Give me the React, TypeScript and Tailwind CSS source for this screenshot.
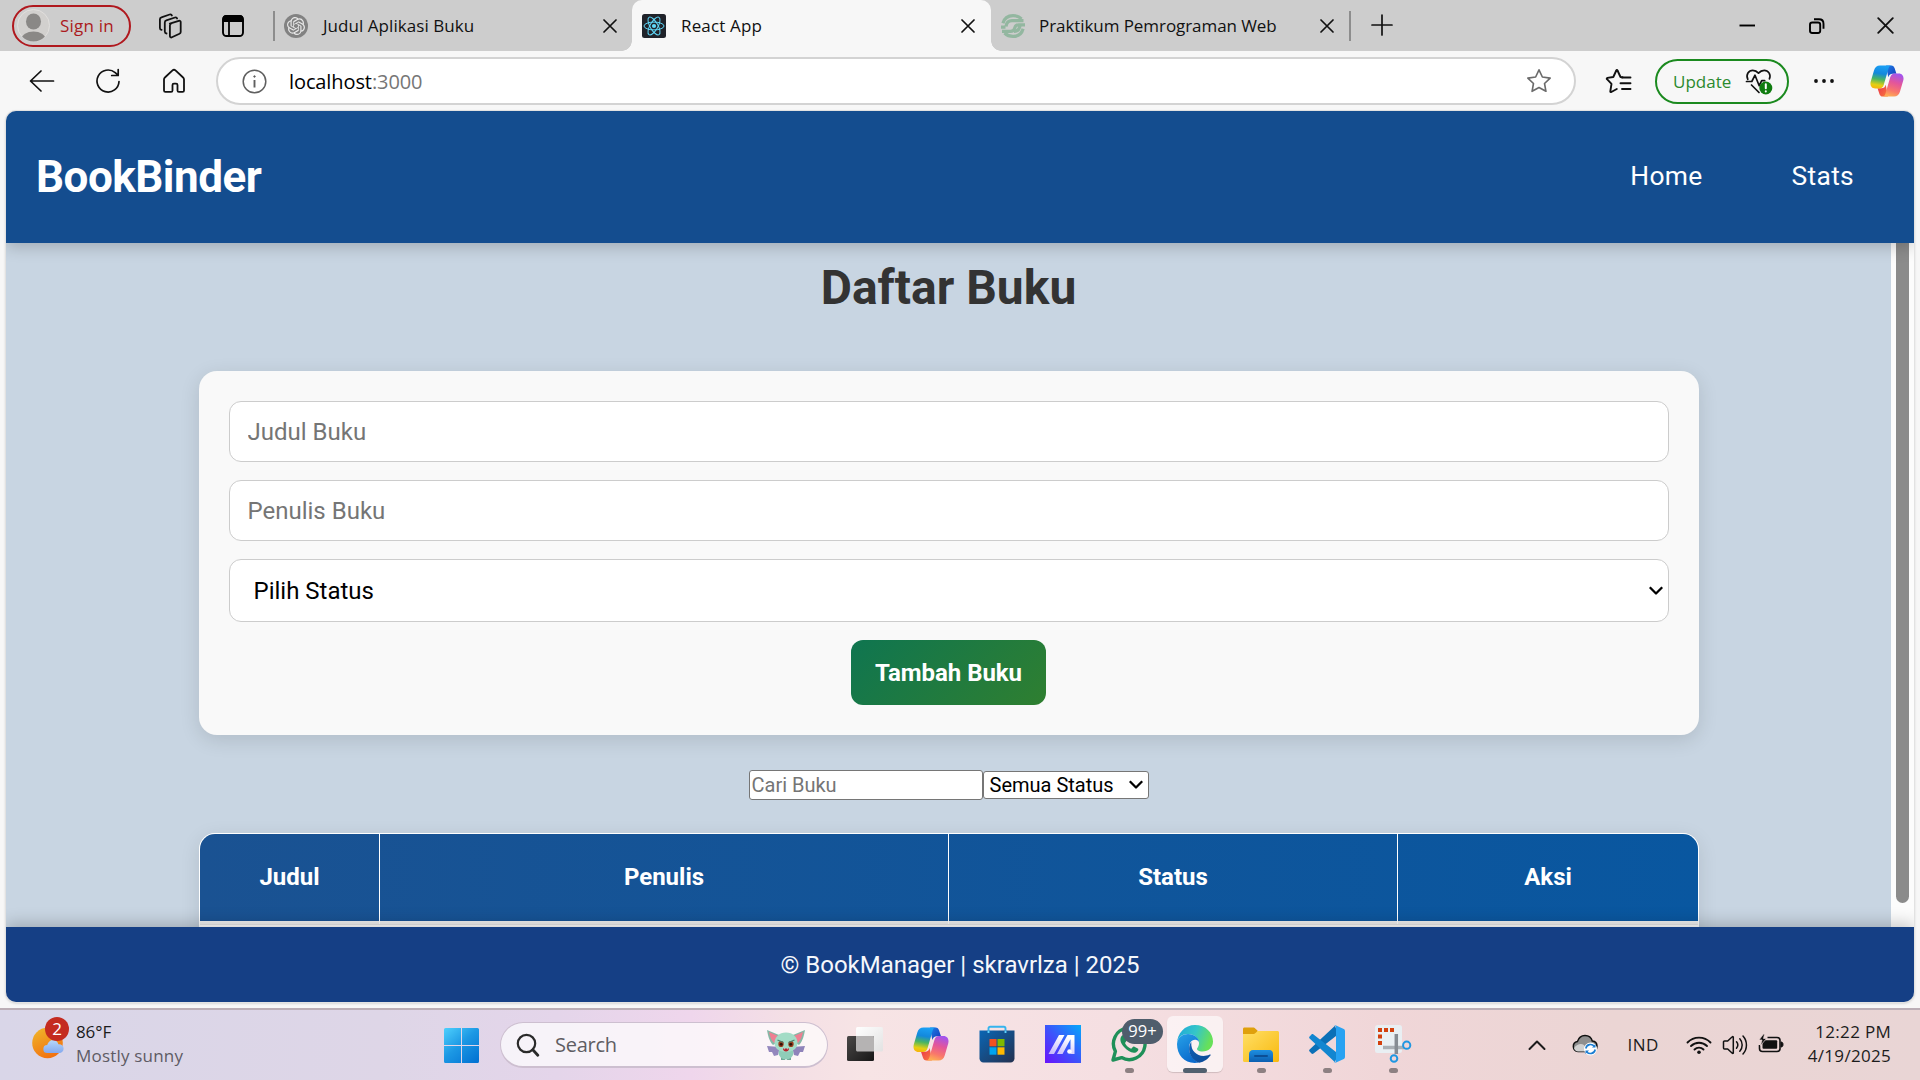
import type { ReactNode } from "react";
import { SiOpenai } from "react-icons/si";

const SEGOE = "font-['Open_Sans','Noto_Sans',sans-serif]";

/* ---------- browser icons ---------- */

function CloseX({ size = 14, sw = 1.7 }: { size?: number; sw?: number }) {
  return (
    <svg width={size} height={size} viewBox="0 0 14 14" fill="none" stroke="#111" strokeWidth={sw} strokeLinecap="round">
      <path d="M1 1l12 12M13 1L1 13" />
    </svg>
  );
}

function WorkspacesIcon() {
  return (
    <svg width="26" height="26" viewBox="0 0 26 26" fill="none" stroke="#111" strokeWidth="1.8" strokeLinejoin="round" strokeLinecap="round">
      <path d="M12.800 10.600l9-2.800c1-.3 1.900.3 1.900 1.300v9.800c0 .8-.4 1.400-1.200 1.800l-7.600 3.600c-1 .5-2-.1-2-1.200V12.400c0-.9.4-1.500 1.200-1.800z" />
      <path d="M9.500 20.500c-1.200-.2-1.700-.8-1.700-1.900V9.400c0-1 .5-1.700 1.500-2l8.700-2.900c1.100-.3 1.800 0 2.100 1" />
      <path d="M4.600 16.800c-1.200-.2-1.700-.8-1.700-1.900V6.300c0-1 .5-1.700 1.500-2l8.300-2.800c1.200-.3 1.900 0 2.200 1" />
    </svg>
  );
}

function TabActionsIcon() {
  return (
    <svg width="24" height="24" viewBox="0 0 24 24" fill="none">
      <rect x="2" y="2" width="20" height="20" rx="3.500" stroke="#000" strokeWidth="1.900" />
      <path d="M1.500 8V5a4 4 0 014-4h13a4 4 0 014 4v3z" fill="#000" />
      <path d="M8 8v14" stroke="#000" strokeWidth="1.800" />
    </svg>
  );
}

function ReactFavicon() {
  return (
    <svg width="24" height="24" viewBox="0 0 24 24">
      <rect width="24" height="24" rx="2.500" fill="#20232a" />
      <g fill="none" stroke="#61dafb" strokeWidth="1">
        <ellipse cx="12" cy="12" rx="10" ry="3.900" />
        <ellipse cx="12" cy="12" rx="10" ry="3.900" transform="rotate(60 12 12)" />
        <ellipse cx="12" cy="12" rx="10" ry="3.900" transform="rotate(120 12 12)" />
      </g>
      <circle cx="12" cy="12" r="2.100" fill="#61dafb" />
    </svg>
  );
}

function SwirlFavicon() {
  return (
    <svg width="24" height="24" viewBox="0 0 24 24" fill="none" stroke="#93b7a0" strokeWidth="3.200">
      <path d="M20.500 5C18 2.600 15 1.600 12 1.600 7 1.600 3.200 4.600 1.900 9.300" />
      <path d="M0 13.200h4.500M1 17.300h8.500c2.500 0 3.500-.8 4-2.500l.5-1.600c.5-1.600 1.500-2.300 3.500-2.300H24" />
      <path d="M5 12.500C5.500 8.500 7.500 6.700 11 6.700H22.500M3.500 19C6 21.400 9 22.400 12 22.400c5 0 8.800-3 10.100-7.700" />
      <path d="M19 11.500c-.5 4-2.500 5.800-6 5.800" />
    </svg>
  );
}

function CopilotIcon({ size, id }: { size: number; id: string }) {
  return (
    <svg width={size} height={size} viewBox="0 0 36 36">
      <defs>
        <linearGradient id={`${id}a`} x1="0.500" y1="0" x2="0.350" y2="1">
          <stop offset="0" stopColor="#1ba0f5" />
          <stop offset=".35" stopColor="#1388dc" />
          <stop offset=".6" stopColor="#4ab562" />
          <stop offset=".85" stopColor="#e5cf12" />
          <stop offset="1" stopColor="#f6b60d" />
        </linearGradient>
        <linearGradient id={`${id}b`} x1="0.700" y1="0" x2="0.400" y2="1">
          <stop offset="0" stopColor="#a154f0" />
          <stop offset=".4" stopColor="#e3559b" />
          <stop offset=".75" stopColor="#f9776b" />
          <stop offset="1" stopColor="#fdac55" />
        </linearGradient>
        <linearGradient id={`${id}c`} x1="0" y1="0" x2="1" y2="1">
          <stop offset="0" stopColor="#1c7fe8" />
          <stop offset="1" stopColor="#1638b8" />
        </linearGradient>
        <linearGradient id={`${id}d`} x1="0" y1="0" x2="1" y2="1">
          <stop offset="0" stopColor="#e8324f" />
          <stop offset="1" stopColor="#fb7a3c" />
        </linearGradient>
      </defs>
      <path d="M17 1.500h5.500c2 0 3 1.200 3.600 3l1.900 5.800h-4c-2.600 0-4 1.300-4.700 3.800z" fill={`url(#${id}c)`} />
      <path d="M19 34.500h-5.500c-2 0-3-1.200-3.600-3L8 25.700h4c2.600 0 4-1.300 4.700-3.800z" fill={`url(#${id}d)`} />
      <path d="M10.500 1.500H23c-2 0-2.800 1.200-3.400 3.200l-5 17.300c-.8 2.600-2.200 4-4.800 4H5.500C1.500 26-.3 22.500.8 18.500L4.300 6.500c1-3.300 3-5 6.200-5z" fill={`url(#${id}a)`} />
      <path d="M25.500 34.500H13c2 0 2.800-1.200 3.400-3.200l5-17.300c.8-2.600 2.200-4 4.800-4h4.300c4 0 5.800 3.500 4.700 7.500l-3.500 12c-1 3.300-3 5-6.200 5z" fill={`url(#${id}b)`} />
    </svg>
  );
}

/* ---------- browser chrome ---------- */

function TabBar() {
  return (
    <div className={`flex h-[51px] shrink-0 items-center bg-[#cdcdcd] text-[17px] text-[#111] ${SEGOE}`}>
      <div className="ml-3 flex h-[42px] w-[119px] items-center rounded-full border-2 border-[#b0181e] pl-1 text-[#ab1a20]">
        <svg width="33" height="33" viewBox="0 0 33 33" className="-ml-px mr-[10px]">
          <defs>
            <clipPath id="avatar">
              <circle cx="16.500" cy="16.500" r="16" />
            </clipPath>
          </defs>
          <circle cx="16.500" cy="16.500" r="16" fill="#d2d0ce" stroke="#e1dfdd" />
          <g clipPath="url(#avatar)" fill="#8a8886">
            <ellipse cx="16.500" cy="12.500" rx="7.500" ry="8" />
            <ellipse cx="16.500" cy="30" rx="12" ry="7.500" />
          </g>
        </svg>
        <span className="tracking-[0.2px]">Sign in</span>
      </div>
      <div className="ml-[26px]"><WorkspacesIcon /></div>
      <div className="ml-[38px]"><TabActionsIcon /></div>
      <div className="ml-[28px] h-[30px] w-[2px] bg-[#8d8d8d]" />
      <div className="ml-[9px] flex size-6 items-center justify-center rounded-full bg-[#828282] text-[#e8e8e8]">
        <SiOpenai size={18} />
      </div>
      <span className="ml-[15px] w-[280px] tracking-[0.050px]">Judul Aplikasi Buku</span>
      <CloseX />
      <div className="relative ml-[15px] flex h-[51px] w-[359px] items-center rounded-t-[10px] bg-[#f7f7f7] pl-[10px]">
        <div className="absolute -left-[10px] bottom-0 size-[10px] bg-[radial-gradient(circle_at_0_0,#cdcdcd_9.500px,#f7f7f7_10px)]" />
        <div className="absolute -right-[10px] bottom-0 size-[10px] bg-[radial-gradient(circle_at_100%_0,#cdcdcd_9.500px,#f7f7f7_10px)]" />
        <ReactFavicon />
        <span className="ml-[15px] w-[280px] tracking-[0.150px]">React App</span>
        <CloseX />
      </div>
      <div className="ml-[10px]"><SwirlFavicon /></div>
      <span className="ml-[14px] w-[281px] tracking-[-0.070px]">Praktikum Pemrograman Web</span>
      <CloseX />
      <div className="ml-[15px] h-[30px] w-[2px] bg-[#8d8d8d]" />
      <svg width="22" height="22" viewBox="0 0 22 22" className="-mt-0.5 ml-5" stroke="#111" strokeWidth="1.700" strokeLinecap="round">
        <path d="M11 1v20M1 11h20" />
      </svg>
      <div className="ml-auto flex items-center pr-[26px]">
        <svg width="16" height="16" viewBox="0 0 16 16" stroke="#000" strokeWidth="1.900"><path d="M0.500 7.500h15.500" /></svg>
        <svg width="18" height="18" viewBox="0 0 18 18" className="ml-[53px]" fill="none" stroke="#000" strokeWidth="1.900">
          <rect x="2" y="5.500" width="10.200" height="10.500" rx="2.200" />
          <path d="M6 2.200h5c2.800 0 4.500 1.700 4.500 4.500v5" />
        </svg>
        <div className="ml-[51px]"><CloseX size={17} sw={1.500} /></div>
      </div>
    </div>
  );
}

function Toolbar() {
  return (
    <div className={`flex h-[60px] shrink-0 items-center bg-[#f7f7f7] ${SEGOE}`}>
      <svg width="26" height="24" viewBox="0 0 26 24" className="ml-[29px]" fill="none" stroke="#111" strokeWidth="1.700" strokeLinecap="round" strokeLinejoin="round">
        <path d="M12 2L1.500 12 12 22M2 12h22.500" />
      </svg>
      <svg width="26" height="26" viewBox="0 0 26 26" className="ml-10" fill="none" stroke="#111" strokeWidth="1.700" strokeLinecap="round" strokeLinejoin="round">
        <path d="M24 13.500a11 11 0 11-3.800-8.800L23 7.200M23.200 1.500v6h-6.500" />
      </svg>
      <svg width="26" height="26" viewBox="0 0 26 26" className="ml-10" fill="none" stroke="#111" strokeWidth="1.800" strokeLinejoin="round">
        <path d="M3 11.500c0-.8.300-1.500.9-2l7.600-7.100c.9-.8 2.100-.8 3 0l7.600 7.100c.6.500.9 1.200.9 2V22.500c0 .8-.6 1.400-1.400 1.400h-3.700c-.8 0-1.400-.6-1.400-1.400v-5.500c0-.8-.6-1.400-1.400-1.400h-2.200c-.8 0-1.400.6-1.400 1.400v5.500c0 .8-.6 1.400-1.400 1.400H4.400c-.8 0-1.400-.6-1.400-1.400z" />
      </svg>
      <div className="ml-[29px] flex h-12 w-[1360px] items-center rounded-full border-2 border-[#d3d3d3] bg-white pl-[24px] pr-[22px]">
        <svg width="25" height="25" viewBox="0 0 25 25" fill="none" stroke="#5f5f5f" strokeWidth="1.500">
          <circle cx="12.500" cy="12.500" r="11.300" />
          <path d="M12.500 11v7.500" strokeWidth="1.900" />
          <circle cx="12.500" cy="7.500" r=".8" fill="#5f5f5f" strokeWidth=".8" />
        </svg>
        <span className="ml-[22px] flex-1 pt-px text-[20px] tracking-[-0.100px] text-black">
          localhost<span className="text-[#767676]">:3000</span>
        </span>
        <svg width="26" height="26" viewBox="0 0 24 24" fill="none" stroke="#6b6b6b" strokeWidth="1.500" strokeLinejoin="round">
          <path d="M12 1.700l3.100 6.600 7.200 1-5.200 5 1.300 7.200L12 18l-6.400 3.500 1.300-7.200-5.200-5 7.200-1z" />
        </svg>
      </div>
      <svg width="28" height="26" viewBox="0 0 28 26" className="ml-[29px]" fill="none" stroke="#111" strokeWidth="1.900" strokeLinejoin="round" strokeLinecap="round">
        <path d="M17.500 9.300l-2-.3-3-6.500c-.2-.6-1-.6-1.200 0L8.300 9l-5.900.9c-.7.1-.9.9-.4 1.300l4.500 4.600-1.200 7.500c-.1.600.5 1 1 .7l5.500-3" />
        <path d="M17 9.500h8.500M15.500 15.300h10M17 21h8.500" />
      </svg>
      <div className="ml-[22px] flex h-[45px] w-[134px] items-center rounded-full border-2 border-[#1b8a1f] pl-4 text-[17px] text-[#2b8a2e]">
        <span className="pt-px">Update</span>
        <svg width="28" height="28" viewBox="0 0 28 28" className="ml-[14px]" fill="none" stroke="#111" strokeWidth="1.700" strokeLinejoin="round" strokeLinecap="round">
          <path d="M2.800 12.300C.5 7.600 3.800 3.300 7.800 3.300c2.600 0 4.300 1.200 5.700 2.800 1.400-1.600 3.100-2.800 5.700-2.800 4 0 7.100 4 5.200 8.500" />
          <path d="M1.500 14.500h5.300l3.200-6.300 4.200 10.500 2.500-5h3M6.500 18l7.500 7.500" />
          <circle cx="20.800" cy="21" r="6.500" fill="#107c10" stroke="none" />
          <path d="M20.800 17.300v4M20.800 24.300v.1" stroke="#fff" strokeWidth="2" />
        </svg>
      </div>
      <svg width="22" height="6" viewBox="0 0 22 6" className="ml-[24px]" fill="#111">
        <circle cx="3" cy="3" r="1.900" />
        <circle cx="11" cy="3" r="1.900" />
        <circle cx="19" cy="3" r="1.900" />
      </svg>
      <div className="ml-[35px]"><CopilotIcon size={34} id="cpTop" /></div>
    </div>
  );
}

/* ---------- page ---------- */

function Chevron() {
  return (
    <svg width="16" height="10" viewBox="0 0 16 10" fill="none" stroke="#000" strokeWidth="2.300" strokeLinejoin="round">
      <path d="M1.800 1.300L8 7.500l6.200-6.200" />
    </svg>
  );
}

const columns = [
  { label: "Judul", width: "w-[180px]" },
  { label: "Penulis", width: "w-[569px]" },
  { label: "Status", width: "w-[449px]" },
  { label: "Aksi", width: "w-[300px]" },
];

function BookPage() {
  return (
    <div className="mx-[6px] flex h-[891px] flex-col overflow-hidden rounded-[10px] font-[Roboto,sans-serif] shadow-[0_0_0_1px_#e2e2e2,0_1px_3px_rgba(0,0,0,0.25)]">
      <header className="relative z-10 flex h-[132px] shrink-0 items-center justify-between bg-[#144d8f] pl-[30px] pr-[60px] text-white shadow-[0_4px_15px_rgba(0,0,0,0.2)]">
        <h1 className="text-[44px] font-bold tracking-[-0.500px]">BookBinder</h1>
        <nav className="flex gap-[89px] text-[26.400px] tracking-[0.300px]">
          <a>Home</a>
          <a>Stats</a>
        </nav>
      </header>

      <div className="flex h-[684px] shrink-0 overflow-hidden bg-[#c8d5e2]">
        <main className="flex flex-1 flex-col items-center">
          <h2 className="mt-[17px] text-[48px] leading-[56px] font-bold text-[#333]">Daftar Buku</h2>

          <form className="mt-[55px] flex h-[364px] w-[1500px] shrink-0 flex-col items-center gap-[18px] rounded-[18px] bg-[#f9f9f9] p-[30px] text-[24px] shadow-[0_5px_20px_rgba(0,0,0,0.12)]">
            <input placeholder="Judul Buku" className="h-[61px] w-full shrink-0 rounded-[12px] border border-[#ccc] bg-white px-[18px] placeholder:text-[#757575]" />
            <input placeholder="Penulis Buku" className="h-[61px] w-full shrink-0 rounded-[12px] border border-[#ccc] bg-white px-[18px] placeholder:text-[#757575]" />
            <div className="flex h-[63px] w-full shrink-0 items-center justify-between rounded-[12px] border border-[#ccc] bg-white pl-[24px] pr-[4px] text-black">
              <span>Pilih Status</span>
              <Chevron />
            </div>
            <button className="h-[65px] w-[195px] shrink-0 rounded-[12px] bg-[linear-gradient(135deg,#0f7550,#2f7f30)] font-bold tracking-[-0.050px] text-white">
              Tambah Buku
            </button>
          </form>

          <div className="mt-[35px] flex shrink-0 items-center text-[20px]">
            <input placeholder="Cari Buku" className="h-[30px] w-[234px] rounded-[3px] border border-[#767676] bg-white px-[2px] placeholder:text-[#757575]" />
            <div className="flex h-[28px] w-[166px] items-center justify-between rounded-[3px] border border-[#767676] bg-white pl-[6px] pr-[4px] text-black">
              <span>Semua Status</span>
              <Chevron />
            </div>
          </div>

          <div className="mt-[33px] w-[1500px] shrink-0 overflow-hidden rounded-t-[16px] border border-b-0 border-white bg-white shadow-[0_5px_20px_rgba(0,0,0,0.1)]">
            <div className="flex h-[87px] divide-x divide-white bg-[linear-gradient(90deg,#1a5292,#0957a0)] text-[24px] font-bold text-white">
              {columns.map((c) => (
                <div key={c.label} className={`flex items-center justify-center pb-[2px] pl-px ${c.width}`}>{c.label}</div>
              ))}
            </div>
            <div className="flex h-[3px] divide-x divide-white bg-[#f0f0f0]">
              {columns.map((c) => (
                <div key={c.label} className={c.width} />
              ))}
            </div>
            <div className="h-10 border-t border-[#e8e8e8] bg-white" />
          </div>
        </main>
        <div className="w-[23px] shrink-0 bg-[#fcfcfc] px-[5px]">
          <div className="h-[660px] rounded-b-full bg-[#8b8b8b]" />
        </div>
      </div>

      <footer className="relative z-10 flex h-[75px] shrink-0 items-center justify-center bg-[#153f85] text-[24px] text-[#f5f8fc] shadow-[0_-4px_15px_rgba(0,0,0,0.2)]">
        © BookManager | skravrlza | 2025
      </footer>
    </div>
  );
}

/* ---------- taskbar ---------- */

function WindowsLogo() {
  return (
    <svg width="35" height="35" viewBox="0 0 35 35">
      <defs>
        <linearGradient id="win" gradientUnits="userSpaceOnUse" x1="0" y1="0" x2="30" y2="35">
          <stop offset="0" stopColor="#4ed0fd" />
          <stop offset=".5" stopColor="#1c98e4" />
          <stop offset="1" stopColor="#0474d3" />
        </linearGradient>
      </defs>
      <g fill="url(#win)">
        <path d="M1.500 0H17v17H0V1.500A1.500 1.500 0 011.500 0zM18 0h15.500A1.500 1.500 0 0135 1.500V17H18zM0 18h17v17H1.500A1.500 1.500 0 010 33.500zM18 18h17v15.500a1.500 1.500 0 01-1.500 1.500H18z" />
      </g>
    </svg>
  );
}

function ImpIcon() {
  return (
    <svg width="38" height="32" viewBox="0 0 38 32">
      <path d="M0 17l13 1-2 8-4 1-2-4-3 0z" fill="#9387bd" />
      <path d="M38 17l-13 1 2 8 4 1 2-4 3 0z" fill="#8f84ba" />
      <path d="M0 1l12 5 2 5-8 5C2 12 1 6 0 1z" fill="#86b8a6" />
      <path d="M38 1L26 6l-2 5 8 5c4-4 5-10 6-15z" fill="#86b8a6" />
      <path d="M2 3l9 4 1 4-5 3C4 11 3 7 2 3zM36 3l-9 4-1 4 5 3c3-3 4-7 5-11z" fill="#ee7f92" />
      <path d="M14 31v-4h4v4zM20 31v-4h4v4z" fill="#6fa797" />
      <ellipse cx="19" cy="24" rx="7.500" ry="6.500" fill="#8fcdb8" />
      <path d="M19 3.500c7 0 11.500 5 11.500 10.500S26 23 19 23 7.500 19.500 7.500 14 12 3.500 19 3.500z" fill="#a3dcc6" />
      <ellipse cx="14" cy="15" rx="2.700" ry="3.100" fill="#9b3d1d" />
      <ellipse cx="24" cy="15" rx="2.700" ry="3.100" fill="#9b3d1d" />
      <circle cx="14.200" cy="15.300" r="1.400" fill="#2c1208" />
      <circle cx="23.800" cy="15.300" r="1.400" fill="#2c1208" />
      <path d="M10.500 11l6 2.500M27.500 11l-6 2.500" stroke="#4d7f6e" strokeWidth="1.200" />
      <path d="M16 19.500h6c0 2-1.300 3-3 3s-3-1-3-3z" fill="#b5202b" />
      <path d="M17 19.500h1l-.5 1.300zM20 19.500h1l-.5 1.300z" fill="#fff" />
    </svg>
  );
}

function TaskViewIcon() {
  return (
    <svg width="36" height="34" viewBox="0 0 36 34">
      <defs>
        <linearGradient id="tv1" x1="0" y1="0" x2="1" y2="1"><stop stopColor="#4a4847" /><stop offset="1" stopColor="#171717" /></linearGradient>
        <linearGradient id="tv2" x1="0" y1="0" x2="1" y2="1"><stop stopColor="#fff" /><stop offset="1" stopColor="#e2e2e2" /></linearGradient>
      </defs>
      <rect x="9" y="0" width="27" height="24.500" rx="1.500" fill="url(#tv2)" />
      <rect x="0" y="9" width="27" height="25" rx="1.500" fill="url(#tv1)" />
      <path d="M9 9h16.500c.8 0 1.500.7 1.500 1.500v14H10.500c-.8 0-1.500-.7-1.500-1.500z" fill="#b5b3b3" />
    </svg>
  );
}

function StoreIcon() {
  return (
    <svg width="36" height="38" viewBox="0 0 36 38">
      <defs>
        <linearGradient id="st" x1="0" y1="0" x2="1" y2="1"><stop stopColor="#0a66b5" /><stop offset="1" stopColor="#243150" /></linearGradient>
      </defs>
      <path d="M9.500 9V3.500C9.500 2.400 10.200 1.800 11.100 1.800h13.800c1 0 1.600.7 1.600 1.700V9" fill="none" stroke="#35b4ee" strokeWidth="1.900" />
      <path d="M.5 5.500h35v28c0 2.300-1.600 4-4 4h-27c-2.400 0-4-1.700-4-4z" fill="url(#st)" />
      <path d="M9.500 5.500v2.500M26.500 5.500v2.500" stroke="#5cd0fb" strokeWidth="1.900" />
      <path d="M10.500 14h7v7.300h-7z" fill="#f25022" />
      <path d="M18.500 14h7v7.300h-7z" fill="#7fba00" />
      <path d="M10.500 22.300h7v7.400h-7z" fill="#00a4ef" />
      <path d="M18.500 22.300h7v7.400h-7z" fill="#ffb900" />
    </svg>
  );
}

function MyAsusIcon() {
  return (
    <svg width="36" height="38" viewBox="0 0 36 38">
      <defs>
        <linearGradient id="as" x1="0" y1="1" x2="1" y2="0"><stop stopColor="#6a12fb" /><stop offset=".5" stopColor="#3b55fb" /><stop offset="1" stopColor="#05a9fb" /></linearGradient>
        <linearGradient id="as2" x1="0" y1="1" x2="0.500" y2="0"><stop stopColor="#c3b4fb" /><stop offset="1" stopColor="#fff" /></linearGradient>
      </defs>
      <rect width="36" height="38" fill="url(#as)" />
      <path d="M3.500 29L14 10h5.500L9 29zM12 29L22.500 10h7v19h-4V14.300L17.500 29z" fill="url(#as2)" />
      <circle cx="24.500" cy="26.500" r="2.300" fill="#fff" />
    </svg>
  );
}

function WhatsAppIcon() {
  return (
    <svg width="36" height="36" viewBox="0 0 36 36">
      <path d="M2 34l2.400-8.600A15.800 15.800 0 1110.600 31.600z" fill="none" stroke="#1f9059" strokeWidth="3.400" strokeLinejoin="round" />
      <path d="M13.300 9.500c-.6-.9-1.600-.6-2.300 0-3 3.200-1.500 7.600 2 11.500 3.600 4.200 8.600 7 12.300 5.200 1.800-.9 2.300-2.600 1.900-3.400l-4.200-2.200c-1.200-.3-1.900 2.100-2.900 2.100-2.500-.8-5-3.300-6-5.500 0-.9 1.600-1.700 1.400-2.900z" fill="#1f9059" />
    </svg>
  );
}

function EdgeIcon() {
  return (
    <svg width="36" height="38" viewBox="0 0 36 38">
      <defs>
        <linearGradient id="e1" x1="0" y1="0" x2="1" y2="0.300"><stop stopColor="#1ca5dc" /><stop offset=".55" stopColor="#35c6c8" /><stop offset="1" stopColor="#67e05a" /></linearGradient>
        <linearGradient id="e2" x1="0" y1="0" x2="0.500" y2="1"><stop stopColor="#27a2e8" /><stop offset="1" stopColor="#0b6bcd" /></linearGradient>
        <linearGradient id="e3" x1="0" y1="0" x2="1" y2="1"><stop stopColor="#1060b5" /><stop offset="1" stopColor="#0c4a95" /></linearGradient>
      </defs>
      <path d="M0 19C0 8 8 0 18 0c10.500 0 18 7.500 18 16.500 0 6-4.500 10-10.500 10-4 0-5.500-1.600-5.500-2.500 0-1 2-2.300 2-6C22 13 17 9 11 9 4 9 0 14 0 19z" fill="url(#e1)" />
      <path d="M0 19C.5 12 6 9 11 9c6 0 11 4 11 8-1-2-3-2.300-4-2.300-4 0-6 4-6 8.300 0 6 4 12.500 10 14.500C9 40 0 31 0 19z" fill="url(#e2)" />
      <path d="M14 19c-2 7 3 14.500 11 14.500 4 0 7-1.500 8.500-3 .6-.5 0-1.400-.8-1C23 34 14 27 14 19zM14.300 17c-4 4.500-3 17 8 20.700 5-.8 9-4 11.200-7.400-1.500 1.500-3.500 1.700-5.500 1.900C20 32 13.500 26 14.300 17z" fill="url(#e3)" />
    </svg>
  );
}

function FolderIcon() {
  return (
    <svg width="36" height="36" viewBox="0 0 36 36">
      <defs>
        <linearGradient id="f1" x1="0" y1="0" x2="1" y2="1"><stop stopColor="#ffdf66" /><stop offset="1" stopColor="#f8b90e" /></linearGradient>
        <linearGradient id="f2" x1="0" y1="0" x2="0" y2="1"><stop stopColor="#1d8fe1" /><stop offset="1" stopColor="#0c5fb1" /></linearGradient>
      </defs>
      <path d="M0 3c0-.8.600-1.500 1.500-1.500H10c1 0 1.600.3 2.200 1l2.300 2V9H0z" fill="#dfa00c" />
      <path d="M0 8h10c1.200 0 2-.3 2.800-1.200l1-1c.6-.7 1.300-.8 2-.8H34.500c.9 0 1.500.7 1.500 1.500V34.500c0 .9-.6 1.500-1.500 1.500H1.500C.6 36 0 35.400 0 34.500z" fill="url(#f1)" />
      <path d="M6 36V28c0-2.300 1.500-4 4-4h16c2.500 0 4 1.700 4 4v8z" fill="url(#f2)" />
      <path d="M12 30h12" stroke="#0b4f96" strokeWidth="2" strokeLinecap="round" />
    </svg>
  );
}

function VsCodeIcon() {
  return (
    <svg width="36" height="38" viewBox="0 0 36 38">
      <path d="M27 11L4.500 28.500c-.7.6-1.500.5-2 0L.6 26.600c-.6-.6-.6-1.500 0-2.100L26 .8 27.500 5z" fill="#0b70b7" />
      <path d="M27 27L4.500 9.500c-.7-.6-1.500-.5-2 0L.6 11.400c-.6.6-.6 1.500 0 2.100L26 37.200 27.500 33z" fill="#1286d0" />
      <path d="M26.500.3l8.300 3.800c.8.400 1.200 1 1.200 1.900v26c0 .9-.4 1.500-1.200 1.900l-8.300 3.800c-.8.300-1.500.2-2-.4 1 .8 2.500 0 2.500-1.300V2c0-1.300-1.500-2.100-2.500-1.300.5-.6 1.200-.7 2-.4z" fill="#28a2f2" />
    </svg>
  );
}

function SnippingIcon() {
  return (
    <svg width="37" height="38" viewBox="0 0 37 38">
      <rect x="0" y="0" width="27" height="28" rx="2.500" fill="#e9eff3" />
      <path d="M3 3h4v4H3zM9 3h4v4H9zM15 3h4v4h-4zM3 9.500h4v4H3zM3 16h4v4H3z" fill="#d3400d" />
      <path d="M8 22.500h21" stroke="#a9afb5" strokeWidth="3.500" />
      <path d="M21.300 9v20" stroke="#868c93" strokeWidth="3.500" />
      <circle cx="31.700" cy="20.200" r="3.600" fill="none" stroke="#1f97e2" strokeWidth="2" />
      <circle cx="19" cy="33.500" r="3.300" fill="none" stroke="#1f97e2" strokeWidth="2" />
    </svg>
  );
}

function WeatherIcon() {
  return (
    <svg width="36" height="34" viewBox="0 0 36 34">
      <defs>
        <linearGradient id="sun" x1="0" y1="0" x2="0.500" y2="1"><stop stopColor="#efb92c" /><stop offset="1" stopColor="#f27310" /></linearGradient>
        <linearGradient id="cld" x1="0" y1="0" x2="0" y2="1"><stop stopColor="#b7d8fb" /><stop offset="1" stopColor="#84a9ee" /></linearGradient>
      </defs>
      <circle cx="15.500" cy="16" r="15.300" fill="url(#sun)" />
      <path d="M15.500 26a4 4 0 01-.3-8c.8-3 3-5 6-5 2.600 0 4.500 1.700 5.200 4.300 3-.3 5.200 1.500 5.200 4.200 0 2.800-1.900 4.500-4.400 4.500z" fill="url(#cld)" />
    </svg>
  );
}

function TaskItem({ children, marker, active }: { children: ReactNode; marker?: boolean; active?: boolean }) {
  return (
    <div className="relative flex h-[70px] w-[66px] items-center justify-center pb-[1px]">
      {active && <div className="absolute top-[6px] left-[5px] h-[56px] w-[56px] rounded-[6px] bg-white/60 shadow-[0_1px_1px_rgba(0,0,0,0.15)]" />}
      <div className="relative -mt-0.5">{children}</div>
      {marker && <div className="absolute top-[58px] h-[5px] w-[9px] rounded-full bg-[#8d8082]" />}
      {active && <div className="absolute top-[58px] h-[5px] w-6 rounded-full bg-[#51606f]" />}
    </div>
  );
}

function Taskbar() {
  return (
    <div className={`mt-[6px] flex h-[72px] shrink-0 items-center border-t-2 border-[#bbaeb6] bg-[linear-gradient(90deg,#d9d6e8_0%,#ded6e7_20%,#e4d5ea_29%,#efd6ec_36%,#f4dfe5_41%,#f7e4e5_45%,#f5dfe2_58%,#f0d6d8_72%,#ebd5d4_84%,#e9d5d5_100%)] text-[17px] text-[#1c1c1c] ${SEGOE}`}>
      <div className="relative ml-8 mb-[3px] flex w-[412px] items-center">
        <WeatherIcon />
        <div className="absolute -top-[3px] left-[13px] flex size-[24px] items-center justify-center rounded-full bg-[#c42b1f] text-[17px] text-white">2</div>
        <div className="ml-2 flex flex-col leading-6">
          <span className="tracking-[-0.100px]">86°F</span>
          <span className="tracking-[0.200px] text-[#5e5b64]">Mostly sunny</span>
        </div>
      </div>
      <WindowsLogo />
      <div className="ml-[21px] flex h-[46px] w-[328px] items-center rounded-full border border-b-2 border-[#cdbfd0] bg-white/70 pl-[15px]">
        <svg width="24" height="24" viewBox="0 0 24 24" fill="none" stroke="#2a2a2a" strokeWidth="2.200" strokeLinecap="round">
          <circle cx="10.500" cy="10.500" r="8.700" />
          <path d="M16.800 16.800l5 5.400" strokeWidth="2.800" />
        </svg>
        <span className="ml-[15px] w-[212px] text-[20px] tracking-[-0.250px] text-[#5f5d62]">Search</span>
        <ImpIcon />
      </div>
      <div className="ml-1 flex">
        <TaskItem><TaskViewIcon /></TaskItem>
        <TaskItem><CopilotIcon size={36} id="cpTask" /></TaskItem>
        <TaskItem><StoreIcon /></TaskItem>
        <TaskItem><MyAsusIcon /></TaskItem>
        <TaskItem marker>
          <WhatsAppIcon />
          <div className="absolute -top-[7px] left-[11px] flex h-[25px] w-[41px] items-center justify-center rounded-full bg-[#4f5d6c] text-[16.500px] text-white">99+</div>
        </TaskItem>
        <TaskItem active><EdgeIcon /></TaskItem>
        <TaskItem marker><FolderIcon /></TaskItem>
        <TaskItem marker><VsCodeIcon /></TaskItem>
        <TaskItem marker><SnippingIcon /></TaskItem>
      </div>
      <div className="ml-auto flex items-center pr-[29px]">
        <svg width="18" height="12" viewBox="0 0 18 12" fill="none" stroke="#1c1c1c" strokeWidth="2" strokeLinecap="round" strokeLinejoin="round">
          <path d="M1.500 10L9 2.500l7.500 7.500" />
        </svg>
        <svg width="26" height="22" viewBox="0 0 26 22" className="ml-[26px]">
          <path d="M6 17.500a5 5 0 01-.6-9.900C6.500 4 9.500 1.500 13 1.500c3.600 0 6.400 2.200 7.300 5.500 2.700.3 4.700 2.500 4.700 5.200 0 3-2.300 5.300-5.300 5.300z" fill="#8e8e8e" stroke="#111" strokeWidth="1.500" />
          <path d="M2 14c3-4 7-5 10-3l4 6.500H6c-2 0-3.500-1.500-4-3.500z" fill="#d0d0d0" />
          <circle cx="18.500" cy="15" r="6.500" fill="#fff" />
          <path d="M13.800 14.500a4.800 4.800 0 018.500-2.200M23.200 15.500a4.800 4.800 0 01-8.500 2.200" fill="none" stroke="#1b7dd2" strokeWidth="1.600" />
          <path d="M23.500 10v3.500H20zM13.500 20v-3.500H17z" fill="#1b7dd2" />
        </svg>
        <span className="ml-[29px] tracking-[0.500px]">IND</span>
        <svg width="26" height="20" viewBox="0 0 26 20" className="ml-[27px]" fill="none" stroke="#111" strokeWidth="1.900" strokeLinecap="round">
          <path d="M1.500 7.500a16 16 0 0123 0M5 11a11.300 11.300 0 0116 0M8.500 14.500a6.400 6.400 0 019 0" />
          <circle cx="13" cy="17.300" r="1.800" fill="#111" stroke="none" />
        </svg>
        <svg width="26" height="22" viewBox="0 0 26 22" className="ml-[10px]" fill="none" stroke="#111" strokeWidth="1.500" strokeLinecap="round" strokeLinejoin="round">
          <path d="M1.500 8c0-.6.400-1 1-1h3.200l4.600-4.300c.4-.4 1-.1 1 .4v15.800c0 .5-.6.800-1 .4L5.700 15H2.500c-.6 0-1-.4-1-1z" />
          <path d="M14.500 7.800a5 5 0 010 6.400M17.800 4.800a9.300 9.300 0 010 12.400M21 2a13.500 13.500 0 010 18" />
        </svg>
        <svg width="26" height="22" viewBox="0 0 26 22" className="-mt-[3px] ml-[10px]" fill="none" stroke="#111" strokeWidth="1.600" strokeLinejoin="round">
          <path d="M9.500 4.500H19a3 3 0 013 3v8a3 3 0 01-3 3H4.500a3 3 0 01-3-3V12" />
          <rect x="4.500" y="7.300" width="14.700" height="8.500" rx="1" fill="#111" stroke="none" />
          <path d="M23 9v5c1.500 0 2-1 2-2.500S24.500 9 23 9z" fill="#111" strokeWidth="1" />
          <path d="M5.500 1L1 7h3L2.500 12.500 8.500 5.500h-3L6.500 1z" fill="#111" stroke="#ead6d5" strokeWidth=".7" />
        </svg>
        <div className="mb-[2px] ml-6 flex flex-col items-end leading-6 tracking-[0.300px]">
          <span>12:22 PM</span>
          <span>4/19/2025</span>
        </div>
      </div>
    </div>
  );
}

export default function App() {
  return (
    <div className="flex h-[1080px] w-[1920px] flex-col overflow-hidden bg-[#f7f7f7]">
      <TabBar />
      <Toolbar />
      <BookPage />
      <Taskbar />
    </div>
  );
}
